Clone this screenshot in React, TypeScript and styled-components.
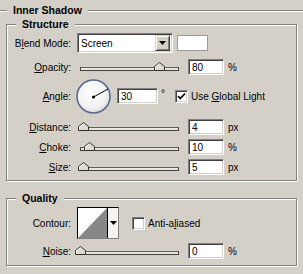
import React from 'react';
import styled, { createGlobalStyle } from 'styled-components';

const GlobalStyle = createGlobalStyle`
  *, *::before, *::after { box-sizing: border-box; }
  html, body {
    margin: 0;
    padding: 0;
    background: #d4d0c8;
  }
  body {
    width: 303px;
    height: 274px;
    overflow: hidden;
    font-family: "Liberation Sans", Arial, sans-serif;
    font-size: 10px;
    color: #000;
  }
`;

// Group boxes (etched frames)
const OuterGroup = styled.fieldset`
  margin: 4px 0 0 0;
  padding: 0;
  width: 303px;
  height: 270px;
  border: none;
  border-top: 1px solid #808080;
  box-shadow: inset 0 1px 0 #fff;
  min-width: 0;
`;

const Group = styled.fieldset<{ $top: number; $pb: number }>`
  margin: ${(p) => p.$top}px 0 0 6px;
  padding: 0 0 ${(p) => p.$pb}px 0;
  width: 291px;
  border: 1px solid #808080;
  box-shadow: inset 1px 1px 0 #fff, 1px 1px 0 #fff;
  min-width: 0;
`;

const Legend = styled.legend<{ $ml?: number }>`
  margin-left: ${(p) => p.$ml ?? 9}px;
  padding: 0 6px;
  font-weight: bold;
  font-size: 10.5px;
  line-height: 12px;
  background: #d4d0c8;
`;

// Rows
const Row = styled.div<{ $h: number; $mt: number }>`
  display: flex;
  align-items: center;
  height: ${(p) => p.$h}px;
  margin-top: ${(p) => p.$mt}px;
`;

const Label = styled.label`
  flex: none;
  width: 64px;
  margin-right: 6px;
  text-align: right;
  white-space: nowrap;
`;

const Unit = styled.span`
  margin-left: 4px;
`;

const Degree = styled.span`
  flex: none;
  width: 17px;
  padding-left: 3px;
  align-self: flex-start;
  margin-top: 10px;
`;

// Controls
const sunken = `
  border: 1px solid;
  border-color: #808080 #fff #fff #808080;
  box-shadow: inset 1px 1px 0 #404040, inset -1px -1px 0 #d4d0c8;
`;

const NumField = styled.input<{ $w: number; $ml: number }>`
  flex: none;
  width: ${(p) => p.$w}px;
  height: 16px;
  margin: 0 0 0 ${(p) => p.$ml}px;
  padding: 0 0 0 3px;
  ${sunken}
  background: #fff;
  font: inherit;
  color: #000;
  outline: none;
`;

const Select = styled.div`
  flex: none;
  display: flex;
  align-items: center;
  width: 96px;
  height: 20px;
  padding: 2px;
  ${sunken}
  background: #fff;
`;

const SelectText = styled.span`
  flex: 1;
  padding-left: 1px;
`;

const DropButton = styled.span`
  display: flex;
  align-items: center;
  justify-content: center;
  width: 15px;
  height: 16px;
  background: #d4d0c8;
  border: 1px solid;
  border-color: #d4d0c8 #404040 #404040 #d4d0c8;
  box-shadow: inset 1px 1px 0 #fff, inset -1px -1px 0 #808080;
`;

const Swatch = styled.span`
  flex: none;
  width: 31px;
  height: 16px;
  margin-left: 4px;
  background: #fff;
  border: 1px solid #9c9c9c;
`;

const SliderBox = styled.div`
  position: relative;
  flex: none;
  width: 105px;
  height: 20px;
  padding: 10px 3px 0;
`;

const Track = styled.div`
  height: 4px;
  border: 1px solid #404040;
  border-top-color: #606060;
  background: #e8e6e1;
`;

const Thumb = styled.svg`
  position: absolute;
  top: 5px;
`;

const Check = styled.span<{ $ml: number }>`
  flex: none;
  display: flex;
  align-items: center;
  justify-content: center;
  width: 13px;
  height: 13px;
  margin-left: ${(p) => p.$ml}px;
  ${sunken}
  background: #fff;
`;

const CheckText = styled.span`
  margin-left: 3px;
  white-space: nowrap;
`;

const Dial = styled.svg`
  flex: none;
  margin-left: -1px;
`;

const ContourPicker = styled.div`
  flex: none;
  display: flex;
  width: 42px;
  height: 32px;
  border: 1px solid #000;
  border-right-color: #808080;
  border-bottom-color: #808080;
  background: #fff;
`;

const ContourArrow = styled.span`
  flex: 1;
  display: flex;
  align-items: center;
  justify-content: center;
  border-left: 1px solid #000;
  background: #f4f4f2;
`;

const Arrow = () => (
  <svg width="7" height="4" viewBox="0 0 7 4">
    <path d="M0 0H7L3.5 4Z" fill="#000" />
  </svg>
);

const Slider = ({ pos }: { pos: number }) => (
  <SliderBox>
    <Track />
    <Thumb width="11" height="9" viewBox="0 0 11 9" style={{ left: 3 + pos * 99 - 5.5 }}>
      <path d="M0.5 8.5V4.5L5.5 0.5L10.5 4.5V8.5Z" fill="#dedbd4" stroke="#303030" />
      <path d="M1.5 7.5V5L5.5 1.8" fill="none" stroke="#fff" />
    </Thumb>
  </SliderBox>
);

const CheckMark = () => (
  <svg width="9" height="9" viewBox="0 0 9 9">
    <path d="M1 4L3.3 6.5L8 1.5" fill="none" stroke="#000" strokeWidth="1.8" />
  </svg>
);

const SliderRow = ({
  label,
  pos,
  value,
  unit,
  mt = 0,
}: {
  label: React.ReactNode;
  pos: number;
  value: string;
  unit: string;
  mt?: number;
}) => (
  <Row $h={20} $mt={mt}>
    <Label>{label}</Label>
    <Slider pos={pos} />
    <NumField $w={36} $ml={6} defaultValue={value} readOnly />
    <Unit>{unit}</Unit>
  </Row>
);

export default function App() {
  return (
    <>
      <GlobalStyle />
      <OuterGroup>
        <Legend $ml={7}>Inner Shadow</Legend>
        <Group $top={2} $pb={3}>
          <Legend>Structure</Legend>
          <Row $h={20} $mt={3}>
            <Label>
              B<u>l</u>end Mode:
            </Label>
            <Select>
              <SelectText>Screen</SelectText>
              <DropButton>
                <Arrow />
              </DropButton>
            </Select>
            <Swatch />
          </Row>
          <SliderRow
            mt={4}
            label={
              <>
                <u>O</u>pacity:
              </>
            }
            pos={0.8}
            value="80"
            unit="%"
          />
          <Row $h={36} $mt={1}>
            <Label>
              <u>A</u>ngle:
            </Label>
            <Dial width="35" height="35" viewBox="0 0 35 35">
              <defs>
                <radialGradient id="dialFill" cx="0.45" cy="0.4" r="0.6">
                  <stop offset="0" stopColor="#ffffff" />
                  <stop offset="0.7" stopColor="#f3f3f3" />
                  <stop offset="1" stopColor="#dcdcdc" />
                </radialGradient>
              </defs>
              <circle cx="17.5" cy="17.5" r="16.5" fill="url(#dialFill)" stroke="#5b6994" strokeWidth="1.6" />
              <line x1="17.5" y1="18" x2="32" y2="10" stroke="#000" strokeWidth="1" />
              <circle cx="17.5" cy="18" r="1.6" fill="#000" />
            </Dial>
            <NumField $w={41} $ml={6} defaultValue="30" readOnly />
            <Degree>°</Degree>
            <Check $ml={0}>
              <CheckMark />
            </Check>
            <CheckText>
              Use <u>G</u>lobal Light
            </CheckText>
          </Row>
          <SliderRow
            mt={3}
            label={
              <>
                <u>D</u>istance:
              </>
            }
            pos={0.04}
            value="4"
            unit="px"
          />
          <SliderRow
            label={
              <>
                <u>C</u>hoke:
              </>
            }
            pos={0.1}
            value="10"
            unit="%"
          />
          <SliderRow
            label={
              <>
                <u>S</u>ize:
              </>
            }
            pos={0.04}
            value="5"
            unit="px"
          />
        </Group>
        <Group $top={11} $pb={4}>
          <Legend>Quality</Legend>
          <Row $h={32} $mt={3}>
            <Label>Contour:</Label>
            <ContourPicker>
              <svg width="29" height="30" viewBox="0 0 29 30">
                <path d="M0 30L29 0V30Z" fill="#878787" />
              </svg>
              <ContourArrow>
                <Arrow />
              </ContourArrow>
            </ContourPicker>
            <Check $ml={13} />
            <CheckText>
              Anti-a<u>l</u>iased
            </CheckText>
          </Row>
          <SliderRow
            mt={2}
            label={
              <>
                <u>N</u>oise:
              </>
            }
            pos={0}
            value="0"
            unit="%"
          />
        </Group>
      </OuterGroup>
    </>
  );
}
